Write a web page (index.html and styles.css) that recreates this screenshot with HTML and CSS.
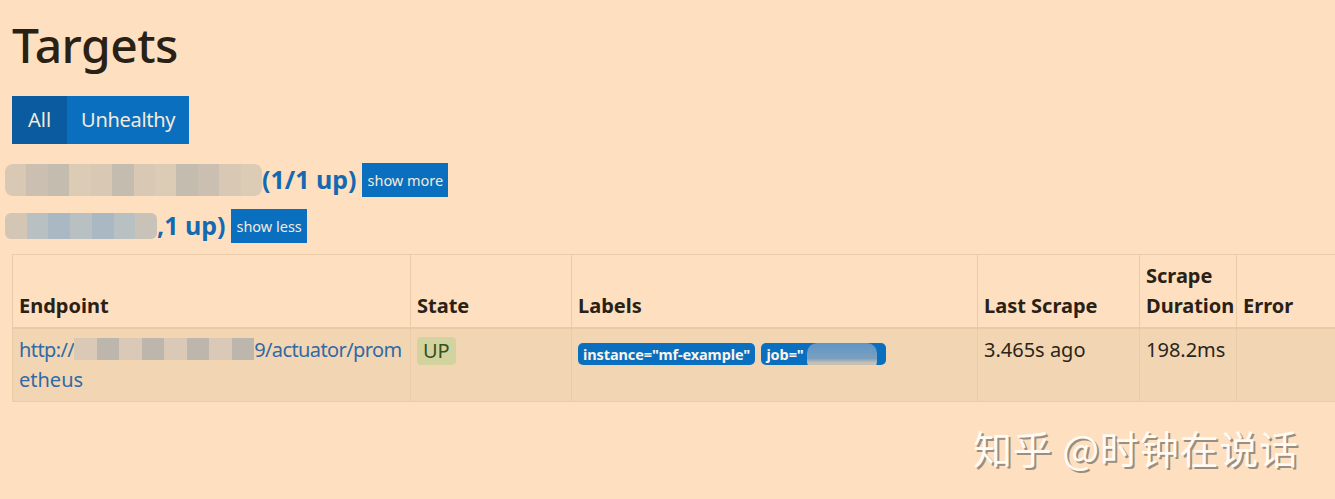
FILE: index.html
```html
<!DOCTYPE html>
<html lang="en">
<head>
<meta charset="utf-8">
<title>Targets</title>
<link rel="stylesheet" href="styles.css">
</head>
<body>
<div class="page">
  <h1 class="title">Targets</h1>
  <div class="btn-group">
    <button class="btn btn-active">All</button>
    <button class="btn btn-tight">Unhealthy</button>
  </div>
  <div class="pool-head">
    <span class="mosaic mosaic-a"><i></i><i></i><i></i><i></i><i></i><i></i><i></i><i></i><i></i><i></i><i></i><i></i></span>
    <a class="pool-link">(1/1 up)</a>
    <button class="btn-sm">show more</button>
  </div>
  <div class="pool-head second">
    <span class="mosaic mosaic-b"><i></i><i></i><i></i><i></i><i></i><i></i><i></i></span>
    <a class="pool-link">,1 up)</a>
    <button class="btn-sm">show less</button>
  </div>
  <table class="targets">
    <colgroup>
      <col class="c-endpoint">
      <col class="c-state">
      <col class="c-labels">
      <col class="c-last">
      <col class="c-dur">
      <col class="c-error">
    </colgroup>
    <thead>
      <tr>
        <th>Endpoint</th>
        <th>State</th>
        <th>Labels</th>
        <th>Last Scrape</th>
        <th>Scrape Duration</th>
        <th>Error</th>
      </tr>
    </thead>
    <tbody>
      <tr>
        <td><a class="endpoint"><span class="nowrap">http://<span class="mosaic mosaic-c"><i></i><i></i><i></i><i></i><i></i><i></i><i></i><i></i></span>9/actuator/prom</span><br>etheus</a></td>
        <td><span class="state-up">UP</span></td>
        <td><span class="label">instance="mf-example"</span> <span class="label label-job">job="<span class="job-blur"></span></span></td>
        <td>3.465s ago</td>
        <td>198.2ms</td>
        <td></td>
      </tr>
    </tbody>
  </table>
  <div class="watermark">知乎 @时钟在说话</div>
</div>
</body>
</html>
```

FILE: styles.css
```css
html, body {
  margin: 0;
  padding: 0;
  background: #fedfbf;
  overflow: hidden;
}
body {
  font-family: "Noto Sans", "Open Sans", "Liberation Sans", sans-serif;
  font-size: 20px;
  line-height: 1.5;
  color: #2b2418;
}
.page {
  padding: 16px 0 0 12px;
  position: relative;
  height: 483px;
}
.title {
  margin: 0 0 22px 0;
  font-size: 48px;
  font-weight: 500;
  line-height: 1.2;
  letter-spacing: -0.5px;
  color: #2a2116;
}
.btn-group {
  display: flex;
  margin-bottom: 18px;
}
.btn {
  border: 0;
  margin: 0;
  font-family: inherit;
  font-size: 20px;
  line-height: 30px;
  padding: 9px 16px;
  background: #0b6fc0;
  color: #f4ead8;
  cursor: pointer;
}
.btn-tight {
  padding: 9px 14px;
  letter-spacing: -0.3px;
}
.btn-active {
  background: #0a5b9f;
}
.pool-head {
  display: flex;
  align-items: center;
  height: 36px;
  margin-left: -7px;
  margin-bottom: 10px;
}
.pool-head.second {
  margin-bottom: 10px;
}
.pool-link {
  font-size: 25px;
  font-weight: 700;
  color: #136ab3;
  margin-right: 6px;
  white-space: nowrap;
}
.btn-sm {
  border: 0;
  font-family: inherit;
  font-size: 14.5px;
  line-height: 22px;
  padding: 6px 5px;
  background: #0b6fc0;
  color: #f4ead8;
}
.mosaic {
  display: inline-flex;
  vertical-align: middle;
}
.mosaic i {
  display: block;
  height: 100%;
}
.mosaic-a {
  width: 257px;
  height: 32px;
  border-radius: 8px;
  overflow: hidden;
}
.mosaic-a i { flex: 1; }
.mosaic-a i:nth-child(odd) { background: #d8c8b4; }
.mosaic-a i:nth-child(even) { background: #cabfb0; }
.mosaic-a i:nth-child(3n) { background: #c4bcaf; }
.mosaic-a i:nth-child(4n) { background: #dccbb5; }
.mosaic-b {
  width: 152px;
  height: 26px;
  border-radius: 6px;
  overflow: hidden;
  margin-right: 0;
}
.mosaic-b i { flex: 1; }
.mosaic-b i:nth-child(odd) { background: #a9b8c2; }
.mosaic-b i:nth-child(even) { background: #b8c0c2; }
.mosaic-b i:nth-child(1) { background: #d3c6b4; }
.mosaic-b i:nth-child(7) { background: #c8c2b8; }
.mosaic-c {
  width: 180px;
  height: 22px;
  vertical-align: -3px;
}
.mosaic-c i { flex: 1; }
.mosaic-c i:nth-child(odd) { background: #d9c9b6; }
.mosaic-c i:nth-child(even) { background: #bdb6ac; }

.targets {
  border-collapse: collapse;
  table-layout: fixed;
  width: 1400px;
}
.c-endpoint { width: 398px; }
.c-state { width: 161px; }
.c-labels { width: 406px; }
.c-last { width: 162px; }
.c-dur { width: 97px; }
.c-error { width: 176px; }
.targets th,
.targets td {
  border: 1px solid #ebcca9;
  padding: 6px 6px;
  text-align: left;
  vertical-align: bottom;
}
.targets th {
  font-weight: 700;
  border-bottom: 2px solid #e9c9a7;
  color: #2a2116;
}
.targets td {
  vertical-align: top;
  background: #f2d6b4;
  height: 60px;
}
.nowrap {
  white-space: nowrap;
  letter-spacing: -0.6px;
}
.endpoint {
  color: #2f6aa7;
}
.state-up {
  display: inline-block;
  background: #d3d3a0;
  color: #35501c;
  border-radius: 4px;
  padding: 0 6px;
  line-height: 28px;
  margin-top: 2px;
}
.label {
  display: inline-block;
  background: #0b6fc0;
  color: #fbf3e6;
  font-weight: 700;
  font-size: 14.5px;
  line-height: 22px;
  padding: 0 5px;
  border-radius: 5px;
  vertical-align: top;
  margin-top: 8px;
  margin-right: 1px;
  letter-spacing: -0.1px;
}
.label-job {
  width: 115px;
  white-space: nowrap;
  overflow: hidden;
  position: relative;
}
.job-blur {
  position: absolute;
  left: 46px;
  top: 0;
  width: 70px;
  height: 28px;
  border-radius: 10px;
  background: linear-gradient(180deg, #5f95c6 0%, #7aa0bf 55%, #c5bfb5 70%, #c8c0b4 100%);
}
.watermark {
  position: absolute;
  left: 973px;
  top: 418px;
  font-family: "Noto Sans CJK SC", sans-serif;
  font-size: 39px;
  color: #fffaf2;
  text-shadow: 2px 2px 0 #9c8e7e;
  letter-spacing: 0.8px;
}
```
